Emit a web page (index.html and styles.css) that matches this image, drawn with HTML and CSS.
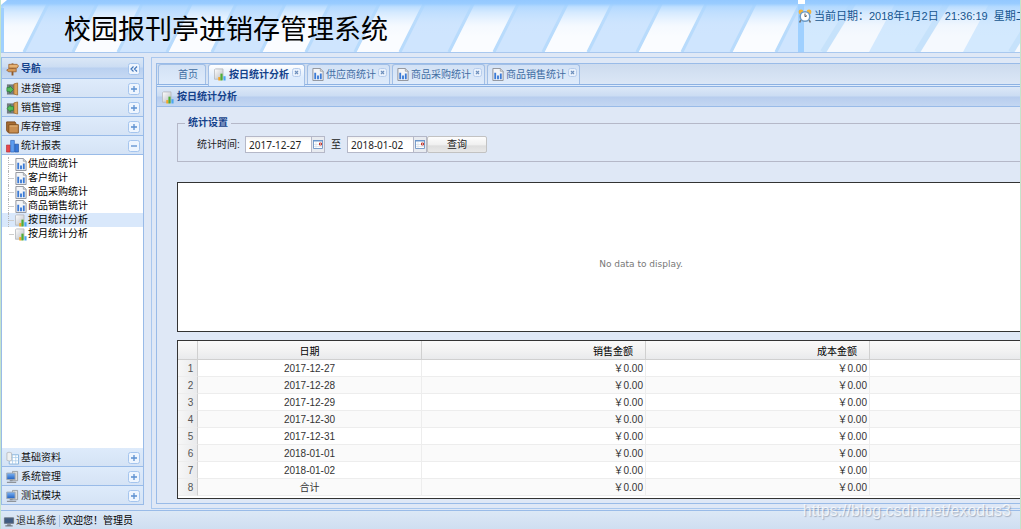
FILE: index.html
```html
<!DOCTYPE html>
<html lang="zh-CN">
<head>
<meta charset="utf-8">
<title>校园报刊亭进销存管理系统</title>
<link rel="stylesheet" href="styles.css">
</head>
<body>
<svg class="defs" aria-hidden="true">
  <defs>
    <linearGradient id="g-blue" x1="0" y1="0" x2="0" y2="1"><stop offset="0" stop-color="#7db4f5"/><stop offset="1" stop-color="#1f5fc0"/></linearGradient>
    <linearGradient id="g-page" x1="0" y1="0" x2="1" y2="1"><stop offset="0" stop-color="#fff"/><stop offset="1" stop-color="#b9bcc2"/></linearGradient>
    <symbol id="i-chart" viewBox="0 0 12 14">
      <path d="M.5 .5h8l3 3v10h-11z" fill="#f4f5f7" stroke="#8b8f97"/><path d="M8.500 .5v3h3" fill="#d5d8dd" stroke="#8b8f97" stroke-width=".7"/>
      <path d="M2 5h2v7H2zM5 8h2v4H5zM8 6h2v6H8z" fill="#3b7bd6"/>
    </symbol>
    <symbol id="i-report" viewBox="0 0 14 14">
      <path d="M1.500 .5h9v12h-10v-11z" fill="url(#g-page)" stroke="#b4b8be"/>
      <path d="M5 10h2.500v4H5z" fill="#f5a623"/><path d="M7.500 6H10v8H7.500z" fill="#4eae35"/><path d="M11 9h2.500v5H11z" fill="#4aa8f0"/>
    </symbol>
    <symbol id="i-sign" viewBox="0 0 14 14">
      <path d="M6 1h2v13H6z" fill="#8d5a2b"/><path d="M3 2h9l1.500 1.700L12 6H3z" fill="#e5b274" stroke="#955d2c" stroke-width=".8"/>
      <path d="M11 6.500H3L.7 8.300 3 10h8z" fill="#d79a58" stroke="#955d2c" stroke-width=".8"/>
    </symbol>
    <symbol id="i-in" viewBox="0 0 14 14">
      <path d="M1 2h8v11H1z" fill="#737b80"/><path d="M8.500 1.500l4-1v13l-4-1z" fill="#dba35a" stroke="#976525" stroke-width=".8"/>
      <path d="M1 5.500h3V3.500L8 7.500l-4 4v-2H1z" fill="#55bd5c" stroke="#247a31" stroke-width=".7"/>
    </symbol>
    <symbol id="i-out" viewBox="0 0 14 14">
      <path d="M1 2h8v11H1z" fill="#737b80"/><path d="M8.500 1.500l4-1v13l-4-1z" fill="#dba35a" stroke="#976525" stroke-width=".8"/>
      <path d="M8 5.500H5V3.500L1 7.500l4 4v-2h3z" fill="#55bd5c" stroke="#247a31" stroke-width=".7"/>
    </symbol>
    <symbol id="i-box" viewBox="0 0 14 14">
      <path d="M.7 1.500h9l1 2v9h-9l-1-2z" fill="#a86e35" stroke="#7b481b"/><path d="M3 4.500h10.300v9H3z" fill="#c98f52" stroke="#80501f"/><path d="M4 6h8.500" stroke="#e2b57d"/>
    </symbol>
    <symbol id="i-bars" viewBox="0 0 14 14">
      <path d="M.5 6h4v7.500h-4z" fill="#e8484c" stroke="#b42b35" stroke-width=".7"/><path d="M5 1h4v12.500H5z" fill="#5d9df0" stroke="#2860b8" stroke-width=".7"/><path d="M9.500 5h4v8.500h-4z" fill="#3777d8" stroke="#2454a0" stroke-width=".7"/>
    </symbol>
    <symbol id="i-data" viewBox="0 0 14 14">
      <path d="M3.500 3.500h10v10h-10z" fill="#fff" stroke="#86b3dc"/><path d="M3.500 6.500h10M3.500 10h10M7 3.500v10M10.500 3.500v10" stroke="#a6cbea" stroke-width=".8"/>
      <path d="M1 1.500q2-1.500 5 0v8q-2 1.500-5 0z" fill="#eef0f1" stroke="#b2b5b9" stroke-width=".8"/>
    </symbol>
    <symbol id="i-pc" viewBox="0 0 14 14">
      <path d="M7 1h5.500v10H7z" fill="#dbdcdd" stroke="#898d92" stroke-width=".8"/><path d="M.8 2.800h9v7h-9z" fill="url(#g-blue)" stroke="#a4a9af"/>
      <path d="M4 10h3v1.500H4zM1 12h10v1.500H1z" fill="#8e949b"/>
    </symbol>
    <symbol id="i-exit" viewBox="0 0 12 12">
      <path d="M1 2h10v6H1z" fill="#405b80" stroke="#68727f"/><path d="M4 9h4v1H4zM2 10h8v1.500H2z" fill="#747c85"/>
    </symbol>
    <symbol id="i-clock" viewBox="0 0 14 14">
      <path d="M3 11l-1.500 2.500M11 11l1.500 2.500" stroke="#777" stroke-width="1.500"/>
      <circle cx="3" cy="3" r="2.400" fill="#f3b53b"/><circle cx="11" cy="3" r="2.400" fill="#f3b53b"/>
      <circle cx="7" cy="7.500" r="4.800" fill="#fff" stroke="#6d9cc8" stroke-width="1.500"/><path d="M7 4.500v3.200l2-1" fill="none" stroke="#555"/>
    </symbol>
    <symbol id="i-plus" viewBox="0 0 12 12"><rect x=".5" y=".5" width="11" height="11" rx="2" fill="#eef5fe" stroke="#a5c5ee"/><path d="M3 6h6M6 3v6" stroke="#5b8fd0" stroke-width="1.300"/></symbol>
    <symbol id="i-minus" viewBox="0 0 12 12"><rect x=".5" y=".5" width="11" height="11" rx="2" fill="#eef5fe" stroke="#a5c5ee"/><path d="M3 6h6" stroke="#5b8fd0" stroke-width="1.300"/></symbol>
    <symbol id="i-fold" viewBox="0 0 12 12"><rect x=".5" y=".5" width="11" height="11" rx="2" fill="#eef5fe" stroke="#a5c5ee"/><path d="M5.500 3.500L3 6l2.500 2.500M9 3.500L6.500 6 9 8.500" fill="none" stroke="#4478bb" stroke-width="1.200"/></symbol>
    <symbol id="i-close" viewBox="0 0 9 9"><rect x=".5" y=".5" width="8" height="8" rx="2" fill="#e9f1fc" stroke="#b6ccec"/><path d="M3 3l3 3M6 3L3 6" stroke="#6f90bd" stroke-width="1.200"/></symbol>
    <symbol id="i-date" viewBox="0 0 10 9"><path d="M.5 .5h9v8h-9z" fill="#fff" stroke="#7b9dc9"/><path d="M0 0h10v1.500H0z" fill="#6b96ca"/><path d="M1 4.500h5M1 6.500h8M3 2v6" stroke="#d5dfea" stroke-width=".7"/><path d="M6.500 3h2v2h-2z" fill="#fff" stroke="#c43a30"/></symbol>
    <linearGradient id="g-fade" x1="0" y1="0" x2="0" y2="1"><stop offset="0" stop-color="#93c8ff"/><stop offset=".07" stop-color="#99ccff"/><stop offset=".13" stop-color="#a8d4ff" stop-opacity=".75"/><stop offset=".24" stop-color="#b0d8ff" stop-opacity=".5"/><stop offset=".5" stop-color="#c8e2ff" stop-opacity=".1"/><stop offset=".7" stop-color="#c8e2ff" stop-opacity="0"/></linearGradient>
    <pattern id="p-stripe" x="63" width="94" height="52" patternUnits="userSpaceOnUse">
      <path d="M0 0h94v52H0z" fill="#cfe5fe"/><path d="M36 0h43L53 52H10z" fill="#fafcff"/><path d="M35 0L9 52M80 0L54 52" stroke="#b8dbfc" stroke-width="3"/>
    </pattern>
    <pattern id="p-wide" x="17" width="94" height="52" patternUnits="userSpaceOnUse">
      <path d="M0 0h94v52H0z" fill="#d3e9fe"/><path d="M40 0h42L54 52H8z" fill="#f5f9fe"/><path d="M40 0L8 52" stroke="#c6e2fb" stroke-width="6"/>
    </pattern>
  </defs>
</svg>

<header class="banner">
  <div class="brand">
    <svg class="art" aria-hidden="true"><rect width="100%" height="100%" fill="url(#p-stripe)"/><rect width="100%" height="100%" fill="url(#g-fade)"/><path d="M0 0h6L0 5z" fill="#fff"/><path d="M1 8v44" stroke="#9fd0ff" stroke-width="4"/></svg>
    <h1>校园报刊亭进销存管理系统</h1>
  </div>
  <div class="today">
    <svg class="art" aria-hidden="true"><rect width="100%" height="100%" fill="url(#p-wide)"/><rect width="100%" height="100%" fill="url(#g-fade)"/><path d="M3 0v52" stroke="#9fd0ff" stroke-width="6"/><path d="M0 0h7v4H0z" fill="#fff"/></svg>
    <svg class="clock"><use href="#i-clock"/></svg>
    <time>当前日期：2018年1月2日&nbsp; 21:36:19&nbsp; 星期二</time>
  </div>
</header>

<div class="workspace">
  <nav class="side">
    <div class="side-title"><svg class="ico"><use href="#i-sign"/></svg><strong>导航</strong><button class="tool" aria-label="收起"><svg><use href="#i-fold"/></svg></button></div>
    <div class="group"><svg class="ico"><use href="#i-in"/></svg><span>进货管理</span><button class="tool" aria-label="展开进货管理"><svg><use href="#i-plus"/></svg></button></div>
    <div class="group"><svg class="ico"><use href="#i-out"/></svg><span>销售管理</span><button class="tool" aria-label="展开销售管理"><svg><use href="#i-plus"/></svg></button></div>
    <div class="group"><svg class="ico"><use href="#i-box"/></svg><span>库存管理</span><button class="tool" aria-label="展开库存管理"><svg><use href="#i-plus"/></svg></button></div>
    <div class="group"><svg class="ico"><use href="#i-bars"/></svg><span>统计报表</span><button class="tool" aria-label="折叠统计报表"><svg><use href="#i-minus"/></svg></button></div>
    <ul class="tree">
      <li><a href="#"><svg class="leaf"><use href="#i-chart"/></svg>供应商统计</a></li>
      <li><a href="#"><svg class="leaf"><use href="#i-chart"/></svg>客户统计</a></li>
      <li><a href="#"><svg class="leaf"><use href="#i-chart"/></svg>商品采购统计</a></li>
      <li><a href="#"><svg class="leaf"><use href="#i-chart"/></svg>商品销售统计</a></li>
      <li class="selected"><a href="#"><svg class="leaf"><use href="#i-report"/></svg>按日统计分析</a></li>
      <li><a href="#"><svg class="leaf"><use href="#i-report"/></svg>按月统计分析</a></li>
    </ul>
    <div class="group"><svg class="ico"><use href="#i-data"/></svg><span>基础资料</span><button class="tool" aria-label="展开基础资料"><svg><use href="#i-plus"/></svg></button></div>
    <div class="group"><svg class="ico"><use href="#i-pc"/></svg><span>系统管理</span><button class="tool" aria-label="展开系统管理"><svg><use href="#i-plus"/></svg></button></div>
    <div class="group"><svg class="ico"><use href="#i-pc"/></svg><span>测试模块</span><button class="tool" aria-label="展开测试模块"><svg><use href="#i-plus"/></svg></button></div>
  </nav>

  <main class="main">
    <div class="panel">
      <div class="tabs">
        <div class="tab home"><button class="tab-label">首页</button></div>
        <div class="tab active"><button class="tab-label"><svg class="tab-ico"><use href="#i-report"/></svg>按日统计分析</button><button class="close" aria-label="关闭"><svg><use href="#i-close"/></svg></button></div>
        <div class="tab"><button class="tab-label"><svg class="tab-ico"><use href="#i-chart"/></svg>供应商统计</button><button class="close" aria-label="关闭"><svg><use href="#i-close"/></svg></button></div>
        <div class="tab"><button class="tab-label"><svg class="tab-ico"><use href="#i-chart"/></svg>商品采购统计</button><button class="close" aria-label="关闭"><svg><use href="#i-close"/></svg></button></div>
        <div class="tab"><button class="tab-label"><svg class="tab-ico"><use href="#i-chart"/></svg>商品销售统计</button><button class="close" aria-label="关闭"><svg><use href="#i-close"/></svg></button></div>
      </div>
      <h2 class="title"><svg class="tab-ico"><use href="#i-report"/></svg>按日统计分析</h2>
      <div class="content">
        <fieldset class="filter">
          <legend>统计设置</legend>
          <div class="row">
            <label for="from">统计时间:</label>
            <span class="date"><input id="from" type="text" value="2017-12-27"><button aria-label="选择开始日期"><svg><use href="#i-date"/></svg></button></span>
            <label class="to" for="to">至</label>
            <span class="date"><input id="to" type="text" value="2018-01-02"><button aria-label="选择结束日期"><svg><use href="#i-date"/></svg></button></span>
            <button class="query">查询</button>
          </div>
        </fieldset>
        <div class="chart">No data to display.</div>
        <div class="grid">
          <table>
            <colgroup><col class="c-num"><col class="c-val"><col class="c-val"><col class="c-val"><col class="c-val"><col></colgroup>
            <thead><tr><th></th><th>日期</th><th class="money">销售金额</th><th class="money">成本金额</th><th></th><th></th></tr></thead>
            <tbody>
              <tr><td>1</td><td>2017-12-27</td><td class="money">￥0.00</td><td class="money">￥0.00</td><td></td><td></td></tr>
              <tr><td>2</td><td>2017-12-28</td><td class="money">￥0.00</td><td class="money">￥0.00</td><td></td><td></td></tr>
              <tr><td>3</td><td>2017-12-29</td><td class="money">￥0.00</td><td class="money">￥0.00</td><td></td><td></td></tr>
              <tr><td>4</td><td>2017-12-30</td><td class="money">￥0.00</td><td class="money">￥0.00</td><td></td><td></td></tr>
              <tr><td>5</td><td>2017-12-31</td><td class="money">￥0.00</td><td class="money">￥0.00</td><td></td><td></td></tr>
              <tr><td>6</td><td>2018-01-01</td><td class="money">￥0.00</td><td class="money">￥0.00</td><td></td><td></td></tr>
              <tr><td>7</td><td>2018-01-02</td><td class="money">￥0.00</td><td class="money">￥0.00</td><td></td><td></td></tr>
              <tr><td>8</td><td>合计</td><td class="money">￥0.00</td><td class="money">￥0.00</td><td></td><td></td></tr>
            </tbody>
          </table>
        </div>
      </div>
    </div>
  </main>
</div>

<footer class="status">
  <button class="logout"><svg><use href="#i-exit"/></svg>退出系统</button>
  <span class="hello">欢迎您！管理员</span>
</footer>
<div class="watermark">https://blog.csdn.net/exodus3</div>
</body>
</html>
```
FILE: styles.css
```css
* { box-sizing: border-box; }
html, body { margin: 0; height: 100%; }
body {
  display: flex;
  flex-direction: column;
  position: relative;
  overflow: hidden;
  background: #dfe8f6;
  border-left: 1px solid #c4e4cb;
  border-right: 1px solid #c4e4cb;
  font: 10px/12px "Liberation Sans", "Noto Sans CJK SC", sans-serif;
  color: #222;
}
button { margin: 0; padding: 0; border: 0; background: none; font: inherit; color: inherit; cursor: pointer; }
svg { display: block; flex: none; }
.defs { position: absolute; width: 0; height: 0; }

.banner { flex: none; display: flex; height: 53px; border-bottom: 1px solid #a9c8ef; overflow: hidden; }
.brand, .today { position: relative; display: flex; }
.brand { flex: 1; align-items: center; padding: 7px 0 0 63px; }
.art { position: absolute; inset: 0; width: 100%; height: 100%; }
.brand h1 { position: relative; margin: 0; font-size: 27px; line-height: 32px; font-weight: 400; color: #000; white-space: nowrap; }
.today { width: 222px; gap: 2px; padding-top: 9px; align-items: flex-start; overflow: hidden; }
.clock { position: relative; width: 14px; height: 14px; }
.today time { position: relative; flex: none; font-size: 11px; line-height: 14px; color: #15558f; white-space: nowrap; }

.workspace { flex: 1; min-height: 0; display: flex; gap: 7px; padding-top: 4px; }
.side {
  flex: none; width: 143px; margin-bottom: 5px;
  display: flex; flex-direction: column;
  border: 1px solid #99bbe8; background: #fff;
}
.side-title, .group {
  flex: none; display: flex; align-items: center; gap: 2px;
  height: 19px; padding: 1px 3px 0 4px;
  border-bottom: 1px solid #99bbe8;
  background: linear-gradient(#deebfb, #d5e3f5);
  color: #111;
}
.group:last-child { border-bottom: 0; height: 18px; }
.side-title { height: 21px; background: linear-gradient(#dae7f6, #ccddf3 45%, #b9d0f0 50%, #c6d9f3); color: #15428b; }
.ico { width: 13px; height: 14px; }
.tool { margin-left: auto; }
.tool svg { width: 12px; height: 12px; }

.tree { flex: 1; min-height: 0; margin: 0; padding: 2px 0 0; list-style: none; }
.tree li { height: 14px; padding-left: 6px; }
.tree a { display: flex; align-items: center; gap: 1px; height: 14px; padding-left: 6px; border-left: 1px dotted #b5b5b5; color: #000; text-decoration: none; background: linear-gradient(#ccc, #ccc) 0 7px / 5px 1px no-repeat; }
.tree li:last-child a { border-left-color: transparent; }
.tree .selected { background: #d9e8fb; }
.leaf { width: 12px; height: 13px; }

.main { flex: 1; min-width: 0; margin-bottom: 1px; padding: 5px 0 4px 4px; border: 1px solid #a9c7ee; border-right: 0; overflow: hidden; }
.panel { height: 100%; display: flex; flex-direction: column; border: 1px solid #99bbe8; border-right: 0; }
.tabs {
  flex: none; display: flex; gap: 2px; height: 23px; padding: 0 1px 2px;
  background: linear-gradient(#cddbee, #dbe7f6 20px, #8db2e3 20px, #8db2e3 21px, #deecfd 21px);
  border-bottom: 1px solid #8db2e3;
}
.tab { display: flex; padding: 0 2px 0 4px; height: 20px; border: 1px solid #a2bfe6; border-bottom: 0; border-radius: 3px 3px 0 0; background: linear-gradient(#d3e2f5, #dfebfb); color: #416da3; }
.tab-label { display: flex; align-items: center; gap: 2px; white-space: nowrap; }
.home { padding: 0 7px 0 19px; }
.active { height: 22px; padding: 0 3px 0 5px; background: linear-gradient(#fff, #deecfd 60%); color: #15428b; font-weight: 700; }
.active .tab-label { height: 19px; gap: 3px; }
.tab-ico { width: 12px; height: 13px; }
.close { align-self: flex-start; margin: 3px 0 0 2px; }
.active .close { margin-left: 3px; }
.close svg { width: 9px; height: 9px; }
.title {
  flex: none; display: flex; align-items: center; gap: 3px;
  height: 20px; margin: 0; padding: 1px 0 0 5px;
  background: linear-gradient(#dce8f7, #cbdcf3 48%, #b7cdee 52%, #c4d7f2);
  border-bottom: 1px solid #99bbe8;
  font-size: 10px; font-weight: 700; color: #15428b;
}
.content { flex: 1; min-height: 0; min-width: 948px; display: flex; flex-direction: column; padding: 10px 0 4px 20px; }
.filter { flex: none; margin: 0 0 20px; min-width: 0; padding: 7px 0 8px 19px; border: 1px solid #b5b8c8; }
.filter legend { margin-left: -12px; padding: 0 3px; font-weight: 700; line-height: 12px; color: #15428b; }
.row { display: flex; align-items: center; height: 17px; }
.row label { width: 48px; padding-top: 1px; white-space: nowrap; }
.row .to { width: 22px; padding-left: 6px; }
.date { display: flex; width: 80px; height: 17px; }
.date input { width: 66px; padding: 0 3px; border: 1px solid #b5b8c8; border-right: 0; background: linear-gradient(#f1f1f1, #fff 4px); font: 10px "Noto Sans", sans-serif; color: #222; }
.date button { display: flex; align-items: center; justify-content: center; width: 14px; border: 1px solid #b5b8c8; background: #e8ebf0; }
.date svg { width: 10px; height: 9px; }
.query { width: 60px; height: 17px; border: 1px solid #c2c2c2; border-radius: 2px; background: linear-gradient(#fdfdfd, #f0f0f0 50%, #dedede 60%, #e8e8e8); }
.chart { flex: 1; min-height: 80px; display: flex; align-items: center; justify-content: center; margin-bottom: 8px; padding-top: 14px; border: 1px solid #333; background: #fff; font: 8px/10px "DejaVu Sans", sans-serif; font-size: 9px; color: #777; }
.grid { flex: none; padding-bottom: 2px; border: 1px solid #333; background: #fff; }
.grid table { width: 100%; table-layout: fixed; border-collapse: separate; border-spacing: 0; }
.c-num { width: 20px; }
.c-val { width: 224px; }
.grid th { height: 19px; padding: 3px 0 0; border-right: 1px solid #d0d0d0; border-bottom: 1px solid #d0d0d0; background: linear-gradient(#f9f9f9, #f3f3f3 50%, #e9eaec); font-weight: 400; color: #000; }
.grid td { height: 17px; padding: 2px 0 0; border-right: 1px solid #ededed; border-bottom: 1px solid #ededed; text-align: center; color: #333; }
.grid tbody tr:nth-child(even) { background: #fafafa; }
.grid td:first-child { padding-left: 6px; border-right-color: #d0d0d0; background: linear-gradient(90deg, #f7f7f7, #e9eaec); color: #555; }
.grid .money { text-align: right; padding-right: 2px; }
.grid th.money { padding-right: 12px; }

.status { flex: none; display: flex; align-items: center; height: 19px; padding: 2px 0 0 2px; border-top: 1px solid #99bbe8; background: linear-gradient(#dce8f6, #cfdef1); }
.logout { display: flex; align-items: center; gap: 1px; padding-right: 3px; border-right: 1px solid #a9c3e4; color: #333; }
.logout svg { width: 12px; height: 11px; }
.hello { padding-left: 3px; color: #000; }
.watermark { position: absolute; right: 9px; bottom: 9px; font-size: 16px; line-height: 18px; color: rgba(255, 255, 255, .75); text-shadow: 1px 1px 1px rgba(90, 100, 120, .4); pointer-events: none; }
```
